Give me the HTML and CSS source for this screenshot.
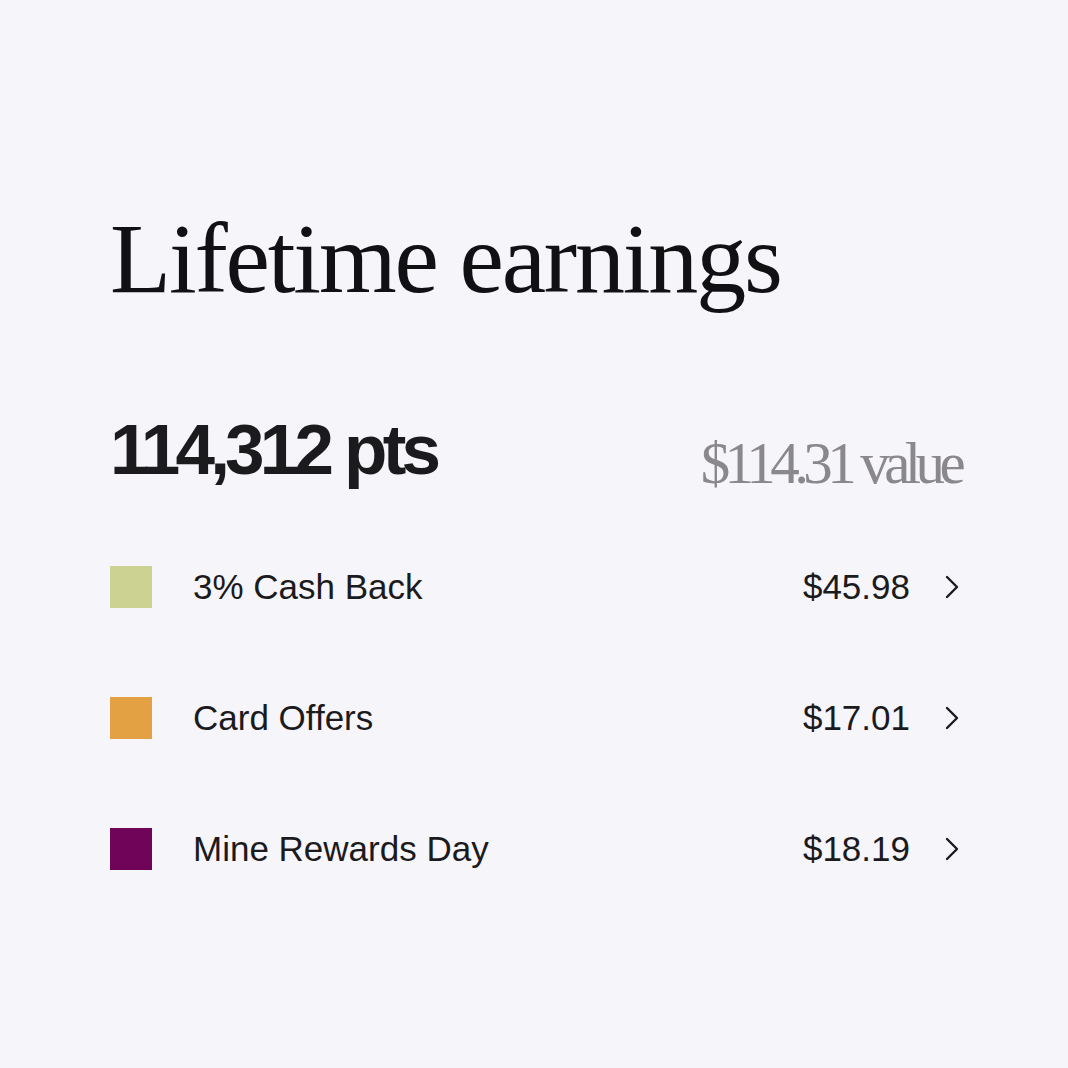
FILE: index.html
```html
<!DOCTYPE html>
<html lang="en">
<head>
<meta charset="utf-8">
<title>Lifetime earnings</title>
<link rel="stylesheet" href="styles.css">
</head>
<body>
<main class="card">
  <h1 class="title">Lifetime earnings</h1>
  <div class="summary">
    <div class="points">114,312 pts</div>
    <div class="value">$114.31 value</div>
  </div>
  <ul class="list">
    <li class="row">
      <span class="swatch swatch-green"></span>
      <span class="label">3% Cash Back</span>
      <span class="amount">$45.98</span>
      <svg class="chev" viewBox="0 0 16 24" width="16" height="24"><path d="M3 2 L13 12 L3 22" fill="none" stroke="#1b1a1d" stroke-width="2.4" stroke-linecap="round" stroke-linejoin="round"/></svg>
    </li>
    <li class="row">
      <span class="swatch swatch-orange"></span>
      <span class="label">Card Offers</span>
      <span class="amount">$17.01</span>
      <svg class="chev" viewBox="0 0 16 24" width="16" height="24"><path d="M3 2 L13 12 L3 22" fill="none" stroke="#1b1a1d" stroke-width="2.4" stroke-linecap="round" stroke-linejoin="round"/></svg>
    </li>
    <li class="row">
      <span class="swatch swatch-purple"></span>
      <span class="label">Mine Rewards Day</span>
      <span class="amount">$18.19</span>
      <svg class="chev" viewBox="0 0 16 24" width="16" height="24"><path d="M3 2 L13 12 L3 22" fill="none" stroke="#1b1a1d" stroke-width="2.4" stroke-linecap="round" stroke-linejoin="round"/></svg>
    </li>
  </ul>
</main>
</body>
</html>
```

FILE: styles.css
```css
html, body {
  margin: 0;
  padding: 0;
  background: #f6f5f9;
}

body {
  width: 1068px;
  height: 1068px;
  color: #1b1a1d;
  font-family: "Liberation Sans", Arial, sans-serif;
}

.card {
  padding: 209px 106px 0 110px;
}

.title {
  margin: 0;
  font-family: "Liberation Serif", "Times New Roman", serif;
  font-weight: 400;
  font-size: 100px;
  line-height: 100px;
  letter-spacing: -2.2px;
  color: #111013;
}

.summary {
  margin-top: 105px;
  display: flex;
  justify-content: space-between;
  align-items: flex-start;
}

.points {
  font-family: "Liberation Sans", Arial, sans-serif;
  font-weight: 700;
  font-size: 71px;
  line-height: 72px;
  letter-spacing: -4.8px;
  color: #1b1a1d;
}

.value {
  margin-top: 19px;
  margin-right: 2px;
  font-family: "Liberation Serif", "Times New Roman", serif;
  font-size: 59px;
  line-height: 60px;
  letter-spacing: -5.6px;
  color: #8a878d;
}

.list {
  list-style: none;
  margin: 73px 0 0;
  padding: 0;
  display: flex;
  flex-direction: column;
  gap: 89px;
}

.row {
  display: flex;
  align-items: center;
  height: 42px;
}

.swatch {
  width: 42px;
  height: 42px;
  flex: none;
}

.swatch-green { background: #ccd392; }
.swatch-orange { background: #e3a143; }
.swatch-purple { background: #6f0458; }

.label {
  margin-left: 41px;
  flex: 1;
  font-size: 35px;
  line-height: 42px;
}

.amount {
  font-size: 35px;
  line-height: 42px;
}

.chev {
  margin-left: 34px;
  margin-right: 2px;
  flex: none;
}
```
